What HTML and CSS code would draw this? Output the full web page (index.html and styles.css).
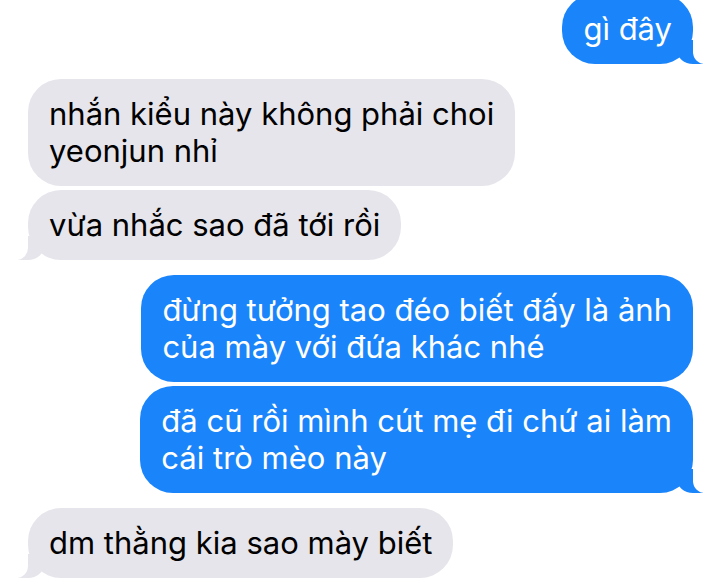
FILE: index.html
```html
<!DOCTYPE html>
<html lang="vi">
<head>
  <meta charset="UTF-8">
  <meta name="viewport" content="width=device-width, initial-scale=1.0">
  <title>Tin nhắn</title>
  <link rel="stylesheet" href="styles.css">
</head>
<body>
  <div class="thread">
    <!-- me -->
    <div class="group sent">
      <div class="bubble tail">gì đây</div>
    </div>

    <!-- them -->
    <div class="group received">
      <div class="bubble">nhắn kiểu này không phải choi<br>yeonjun nhỉ</div>
      <div class="bubble tail">vừa nhắc sao đã tới rồi</div>
    </div>

    <!-- me -->
    <div class="group sent">
      <div class="bubble">đừng tưởng tao đéo biết đấy là ảnh<br>của mày với đứa khác nhé</div>
      <div class="bubble tail">đã cũ rồi mình cút mẹ đi chứ ai làm<br>cái trò mèo này</div>
    </div>

    <!-- them -->
    <div class="group received">
      <div class="bubble tail">dm thằng kia sao mày biết</div>
    </div>
  </div>
</body>
</html>
```

FILE: styles.css
```css
body {
  margin: 0;
  padding: 0;
  background-color: #ffffff;
  font-family: Inter, "Noto Sans", sans-serif;
  color: #000000;
  overflow: hidden;
}
.thread {
  display: flex;
  flex-direction: column;
  gap: 15px;
  padding: 0 27px 0 28px;
  margin-top: -6px;
}
.group {
  display: flex;
  flex-direction: column;
  gap: 4px;
}
.group.sent {
  align-items: flex-end;
}
.group.received {
  align-items: flex-start;
}
.bubble {
  position: relative;
  font-size: 31px;
  line-height: 37px;
  padding: 16px 21px 17px 21px;
  border-radius: 33px;
  white-space: nowrap;
}
.sent .bubble {
  background-color: #1a84fa;
  color: #ffffff;
}
.received .bubble {
  background-color: #e6e5eb;
  color: #000000;
}

/* tails */
.bubble.tail::before,
.bubble.tail::after {
  content: "";
  position: absolute;
  bottom: 0;
  height: 24px;
}
.sent .bubble.tail::before {
  right: -10px;
  width: 26px;
  background-color: #1a84fa;
  border-bottom-left-radius: 16px 14px;
}
.sent .bubble.tail::after {
  right: -20px;
  width: 20px;
  background-color: #ffffff;
  border-bottom-left-radius: 12px;
}
.received .bubble.tail::before {
  left: -10px;
  width: 26px;
  background-color: #e6e5eb;
  border-bottom-right-radius: 16px 14px;
}
.received .bubble.tail::after {
  left: -20px;
  width: 20px;
  background-color: #ffffff;
  border-bottom-right-radius: 12px;
}
```
